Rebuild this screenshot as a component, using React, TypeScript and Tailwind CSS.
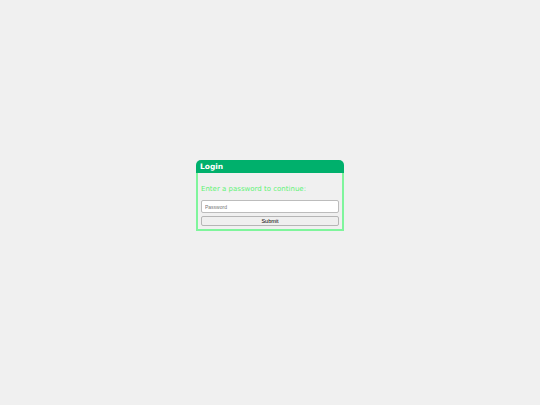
export default function App() {
  return (
    <div className="w-[540px] h-[405px] bg-[#f0f0f0] pt-[160px] font-['DejaVu_Sans',sans-serif]">
      <div className="mx-auto w-[148px]">
        <div className="h-[13px] rounded-t-[5px] bg-[#00b06c] pl-[4px] text-[7.5px] leading-[13px] font-bold text-white">
          Login
        </div>
        <div className="border-2 border-t-0 border-[#7ff59c] px-[3px] pt-[11px] pb-[3px]">
          <p className="text-[7px] leading-[10px] text-[#5ef276]">Enter a password to continue:</p>
          <input
            type="password"
            placeholder="Password"
            className="mt-[6px] block w-full h-[13px] bg-white border border-[#bcbcbc] rounded-[2px] px-[3px] text-[5px] font-['Liberation_Sans',sans-serif] placeholder:text-[#777]"
          />
          <button className="mt-[3px] block w-full h-[10px] bg-[#efefef] border border-[#b5b5b5] rounded-[2px] text-[5.5px] leading-[8px] text-black font-['Liberation_Sans',sans-serif]">
            Submit
          </button>
        </div>
      </div>
    </div>
  );
}
